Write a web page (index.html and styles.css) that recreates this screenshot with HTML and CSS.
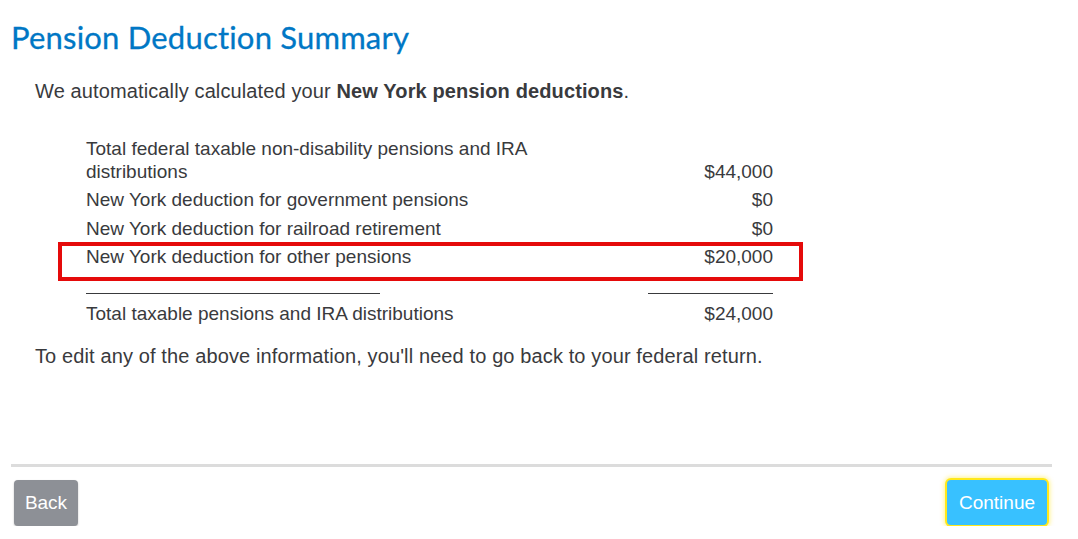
FILE: index.html
```html
<!DOCTYPE html>
<html>
<head>
<meta charset="utf-8">
<link rel="stylesheet" href="styles.css">
</head>
<body>
<div class="page">
  <h1 class="title">Pension Deduction Summary</h1>
  <p class="intro">We automatically calculated your <b>New York pension deductions</b>.</p>
  <div class="summary">
    <div class="row">
      <div class="label">Total federal taxable non-disability pensions and IRA distributions</div>
      <div class="amount">$44,000</div>
    </div>
    <div class="row">
      <div class="label">New York deduction for government pensions</div>
      <div class="amount">$0</div>
    </div>
    <div class="row">
      <div class="label">New York deduction for railroad retirement</div>
      <div class="amount">$0</div>
    </div>
    <div class="row highlighted">
      <div class="label">New York deduction for other pensions</div>
      <div class="amount">$20,000</div>
      <span class="mark"></span>
    </div>
    <div class="rules">
      <span class="rule-left"></span>
      <span class="rule-right"></span>
    </div>
    <div class="row total">
      <div class="label">Total taxable pensions and IRA distributions</div>
      <div class="amount">$24,000</div>
    </div>
  </div>
  <p class="note">To edit any of the above information, you'll need to go back to your federal return.</p>
  <div class="footer">
    <button class="btn back">Back</button>
    <button class="btn continue">Continue</button>
  </div>
</div>
</body>
</html>
```
FILE: styles.css
```css
html, body {
  margin: 0;
  padding: 0;
  background: #fff;
}
.page {
  padding: 0 26px 0 11px;
  font-family: "Liberation Sans", Arial, sans-serif;
  color: #393a3d;
}
.title {
  margin: 0;
  padding-top: 18px;
  font-family: Lato, "Open Sans", sans-serif;
  font-weight: 400;
  font-size: 31px;
  line-height: 38px;
  color: #0077c5;
  letter-spacing: 0.2px;
  -webkit-text-stroke: 0.3px #0077c5;
}
.intro {
  margin: 23px 0 0 24px;
  font-size: 20px;
  line-height: 24px;
  letter-spacing: 0.12px;
}
.intro b {
  font-weight: 700;
}
.summary {
  margin: 30px 0 0 75px;
  width: 687px;
}
.row {
  position: relative;
  display: flex;
  justify-content: space-between;
  align-items: flex-end;
  padding: 3.5px 0 2px;
  font-size: 19px;
  line-height: 23px;
}
.label {
  width: 450px;
}
.amount {
  text-align: right;
}
.mark {
  position: absolute;
  left: -28px;
  right: -30px;
  top: 0;
  height: 31px;
  border: 4px solid #e50a0a;
}
.rules {
  display: flex;
  justify-content: space-between;
  margin-top: 23px;
}
.rule-left {
  width: 294px;
  border-top: 1px solid #393a3d;
}
.rule-right {
  width: 125px;
  border-top: 1px solid #393a3d;
}
.total {
  padding-top: 8px;
}
.note {
  margin: 17px 0 0 24px;
  font-size: 20px;
  line-height: 24px;
  letter-spacing: 0.12px;
}
.footer {
  margin-top: 96px;
  border-top: 3px solid #dcdcdc;
  padding: 13px 5px 0 3px;
  display: flex;
  justify-content: space-between;
}
.btn {
  font-family: "Liberation Sans", Arial, sans-serif;
  font-size: 19px;
  color: #fff;
  border: none;
  border-radius: 4px;
  height: 46px;
  padding: 0 10px;
  cursor: pointer;
}
.back {
  background: #8d9096;
  width: 64px;
  box-shadow: 0 1px 2px rgba(0,0,0,0.25);
}
.continue {
  background: #38c1ff;
  width: 100px;
  height: 45px;
  box-shadow: 0 0 0 2px #ffe81a, 0 0 4px 3px rgba(255, 232, 26, 0.5);
}
```
